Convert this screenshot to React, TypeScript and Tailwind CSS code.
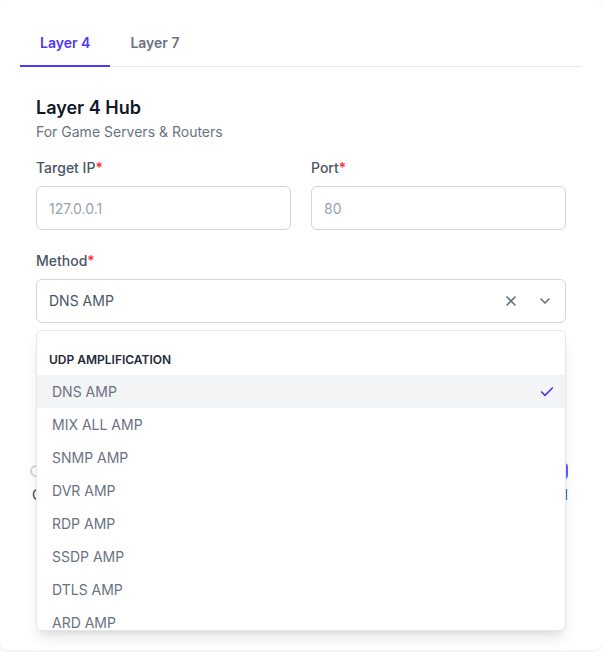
import { Check, ChevronDown, X } from "lucide-react";

const options = [
  "DNS AMP",
  "MIX ALL AMP",
  "SNMP AMP",
  "DVR AMP",
  "RDP AMP",
  "SSDP AMP",
  "DTLS AMP",
  "ARD AMP",
];

function Label({ children }: { children: React.ReactNode }) {
  return (
    <label className="block text-sm font-medium leading-5 text-gray-600">
      {children}
      <span className="text-red-500">*</span>
    </label>
  );
}

export default function App() {
  return (
    <div
      className="min-h-screen bg-white"
      style={{ fontFamily: "Inter, 'Noto Sans', sans-serif" }}
    >
      <div className="relative h-[650px] rounded-lg bg-white shadow-[0_1px_4px_rgba(0,0,0,0.08)]">
        <div className="px-5 pt-[21px]">
          <nav className="flex border-b border-gray-200">
            <button className="-mb-px border-b-2 border-indigo-600 px-5 py-3 text-sm font-semibold leading-5 text-indigo-600">
              Layer 4
            </button>
            <button className="-mb-px border-b-2 border-transparent px-5 py-3 text-sm font-semibold leading-5 text-gray-500">
              Layer 7
            </button>
          </nav>
        </div>

        <div className="px-9 pt-[27px]">
          <h2 className="text-lg font-semibold leading-7 text-gray-900">Layer 4 Hub</h2>
          <p className="text-sm leading-5 text-gray-500">For Game Servers &amp; Routers</p>

          <div className="mt-4 grid grid-cols-2 gap-5">
            <div>
              <Label>Target IP</Label>
              <input
                placeholder="127.0.0.1"
                className="mt-2 h-11 w-full rounded-md border border-gray-300 px-3 text-sm text-gray-700 placeholder:text-gray-400"
              />
            </div>
            <div>
              <Label>Port</Label>
              <input
                placeholder="80"
                className="mt-2 h-11 w-full rounded-md border border-gray-300 px-3 text-sm text-gray-700 placeholder:text-gray-400"
              />
            </div>
          </div>

          <div className="relative mt-[21px]">
            <Label>Method</Label>
            <div className="mt-2 flex h-11 items-center rounded-md border border-gray-300 pl-3 pr-3">
              <span className="flex-1 text-sm text-gray-600">DNS AMP</span>
              <X className="mr-[18px] h-4 w-4 text-gray-500" strokeWidth={2.5} />
              <ChevronDown className="h-4 w-4 text-gray-500" strokeWidth={2.5} />
            </div>

            {/* hidden fields under the open menu */}
            <div className="-ml-1.5 -mr-0.5 mt-[140px] flex items-center justify-between">
              <span className="h-3 w-3 rounded-full border-2 border-gray-300" />
              <span className="h-4 w-[10px] rounded-sm bg-indigo-500" />
            </div>
            <div className="-ml-1 -mr-0.5 mt-[6px] flex items-center justify-between text-sm text-gray-700">
              <span>Concurrents</span>
              <span>Full</span>
            </div>

            <div className="absolute left-0 right-0 top-[79px] z-10 h-[301px] overflow-hidden rounded-md border border-gray-200 bg-white shadow-lg">
              <div className="px-3 pb-[7px] pt-[21px] text-xs font-semibold uppercase leading-4 text-gray-800">
                UDP Amplification
              </div>
              <ul>
                {options.map((opt, i) => (
                  <li
                    key={opt}
                    className={`flex h-[33px] items-center justify-between pl-[15px] pr-[10px] text-sm text-gray-500 ${
                      i === 0 ? "bg-gray-100" : ""
                    }`}
                  >
                    <span>{opt}</span>
                    {i === 0 && <Check className="h-4 w-4 text-indigo-600" strokeWidth={2.5} />}
                  </li>
                ))}
              </ul>
            </div>
          </div>
        </div>
      </div>
    </div>
  );
}
